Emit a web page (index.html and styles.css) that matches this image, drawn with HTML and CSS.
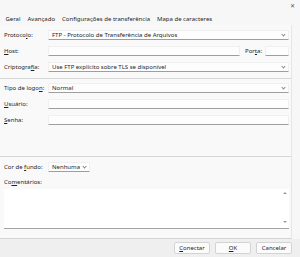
FILE: index.html
```html
<!DOCTYPE html>
<html>
<head>
<meta charset="utf-8">
<link rel="stylesheet" href="styles.css">
</head>
<body>
<div class="win">
  <div class="titlebar"><span class="close">✕</span></div>
  <div class="tabs">
    <span class="tab active">Geral</span>
    <span class="tab">Avançado</span>
    <span class="tab">Configurações de transferência</span>
    <span class="tab">Mapa de caracteres</span>
  </div>
  <div class="page">
    <div class="row r-proto">
      <label class="lbl">Protoco<u>l</u>o:</label>
      <div class="select grow"><span>FTP - Protocolo de Transferência de Arquivos</span><span class="chev"></span></div>
    </div>
    <div class="row r-host">
      <label class="lbl"><u>H</u>ost:</label>
      <div class="input grow"></div>
      <label class="lbl-port">Por<u>t</u>a:</label>
      <div class="input port"></div>
    </div>
    <div class="row r-crypt">
      <label class="lbl">Criptogra<u>f</u>ia:</label>
      <div class="select grow"><span>Use FTP explícito sobre TLS se disponível</span><span class="chev"></span></div>
    </div>
    <div class="sep"></div>
    <div class="row r-logon">
      <label class="lbl">Tipo de logo<u>n</u>:</label>
      <div class="select grow"><span>Normal</span><span class="chev"></span></div>
    </div>
    <div class="row r-user">
      <label class="lbl"><u>U</u>suário:</label>
      <div class="input grow"></div>
    </div>
    <div class="row r-pass">
      <label class="lbl"><u>S</u>enha:</label>
      <div class="input grow"></div>
    </div>
    <div class="sep sep2"></div>
    <div class="row r-color">
      <label class="lbl">Cor de <u>f</u>undo:</label>
      <div class="select small"><span>Nenhuma</span><span class="chev"></span></div>
    </div>
    <div class="row r-comm">
      <label class="lbl">Co<u>m</u>entários:</label>
    </div>
    <div class="textarea">
      <div class="scroll"><span class="arr up"></span><span class="arr down"></span></div>
    </div>
  </div>
  <div class="footer">
    <button class="btn"><u>C</u>onectar</button>
    <button class="btn"><u>O</u>K</button>
    <button class="btn">Cancelar</button>
  </div>
</div>
</body>
</html>
```
FILE: styles.css
```css
* { box-sizing: border-box; }
html, body { margin: 0; padding: 0; }
body {
  width: 300px;
  height: 257px;
  background: #f0f0f0;
  font-family: "Noto Sans", "Open Sans", sans-serif;
  font-size: 6px;
  color: #1f1f1f;
  overflow: hidden;
}
.win { height: 257px; display: flex; flex-direction: column; background: #f7f7f7; }
.titlebar {
  height: 12px;
  flex: none;
  display: flex;
  justify-content: flex-end;
  align-items: center;
  padding-right: 5px;
}
.close { font-size: 6px; color: #555; }
.tabs {
  height: 13px;
  flex: none;
  display: flex;
  align-items: center;
  padding-left: 2px;
}
.tab { padding: 0 3.5px; white-space: nowrap; }
.page {
  height: 214px;
  flex: none;
  background: #f9f9f9;
  margin-right: 8px;
  border-right: 1px solid #e6e6e6;
  border-bottom: 1px solid #d4d4d4;
  padding: 2px 2px 0 4px;
  display: flex;
  flex-direction: column;
}
.row { display: flex; align-items: center; height: 16px; flex: none; }
.lbl { width: 44px; white-space: nowrap; }
.grow { flex: 1; }
.select, .input {
  height: 10px;
  background: #fdfdfd;
  border: 1px solid #f0f0f0;
  border-bottom: 1px solid #9e9e9e;
  border-radius: 1px;
  display: flex;
  align-items: center;
  padding-left: 3px;
}
.select span:first-child { flex: 1; white-space: nowrap; }
.chev {
  width: 3px; height: 3px;
  border-right: 1px solid #888;
  border-bottom: 1px solid #888;
  transform: rotate(45deg);
  margin: 0 3px 2px 0;
}
.lbl-port { margin: 0 3px 0 5px; white-space: nowrap; }
.port { width: 24px; }
.sep { height: 1px; flex: none; background: #d6d6d6; margin: 3px -2px 1px -4px; }
.sep2 { margin-top: 28px; margin-bottom: 2px; }
.small { width: 42px; }
.r-comm { height: 13px; }
.textarea {
  height: 40px;
  flex: none;
  background: #ffffff;
  margin-top: 1px;
  border-bottom: 1px solid #a5a5a5;
  display: flex;
  justify-content: flex-end;
}
.scroll { width: 8px; display: flex; flex-direction: column; justify-content: space-between; align-items: center; padding: 3px 0 5px; }
.arr { width: 0; height: 0; border-left: 2px solid transparent; border-right: 2px solid transparent; }
.arr.up { border-bottom: 2px solid #999; }
.arr.down { border-top: 2px solid #999; }
.footer {
  flex: 1;
  display: flex;
  justify-content: flex-end;
  align-items: center;
  gap: 5px;
  padding-right: 8px;
  background: #efefef;
}
.btn {
  width: 36px;
  height: 12px;
  font-family: inherit;
  font-size: 6px;
  background: #fbfbfb;
  border: 1px solid #d3d3d3;
  border-radius: 2px;
  padding: 0;
  color: #1f1f1f;
}
```
